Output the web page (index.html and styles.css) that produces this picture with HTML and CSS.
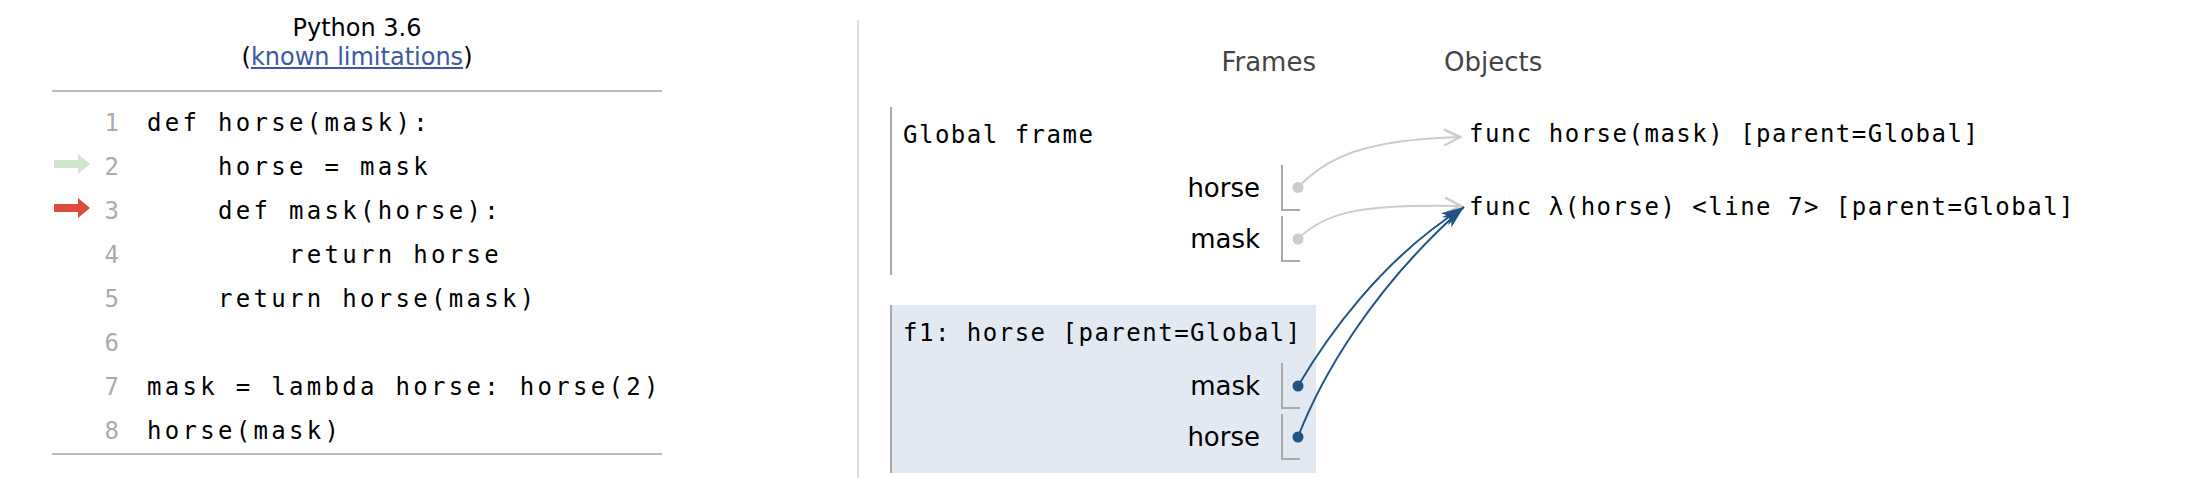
FILE: index.html
```html
<html>
<head>

	<meta charset="utf-8">
	<title>Python Tutor</title>

	<link rel="stylesheet" href="styles.css">

</head>
<body>

	<div class="page">

		<div class="codePane">

			<div class="langDisplay">
				Python 3.6<br>
				(<a href="#">known limitations</a>)
			</div>

			<div class="code">
				<div class="line"><span class="arrow"></span><span class="num">1</span><span class="src">def horse(mask):</span></div>
				<div class="line"><span class="arrow"><svg width="36" height="20"><rect x="0" y="6" width="25" height="8" fill="#cfe5cc"/><polygon points="24,0 36,10 24,20" fill="#cfe5cc"/></svg></span><span class="num">2</span><span class="src">    horse = mask</span></div>
				<div class="line"><span class="arrow"><svg width="36" height="20"><rect x="0" y="6" width="25" height="8" fill="#dc4a3d"/><polygon points="24,0 36,10 24,20" fill="#dc4a3d"/></svg></span><span class="num">3</span><span class="src">    def mask(horse):</span></div>
				<div class="line"><span class="arrow"></span><span class="num">4</span><span class="src">        return horse</span></div>
				<div class="line"><span class="arrow"></span><span class="num">5</span><span class="src">    return horse(mask)</span></div>
				<div class="line"><span class="arrow"></span><span class="num">6</span><span class="src"></span></div>
				<div class="line"><span class="arrow"></span><span class="num">7</span><span class="src">mask = lambda horse: horse(2)</span></div>
				<div class="line"><span class="arrow"></span><span class="num">8</span><span class="src">horse(mask)</span></div>
			</div>

		</div>


		<div class="viz">

			<div class="framesCol">
				<div class="vizHeader">Frames</div>

				<div class="frame">
					<div class="frameTitle">Global frame</div>
					<div class="vars">
						<div class="var"><span class="varName">horse</span><span class="val"></span></div>
						<div class="var"><span class="varName">mask</span><span class="val"></span></div>
					</div>
				</div>

				<div class="frame current">
					<div class="frameTitle">f1: horse [parent=Global]</div>
					<div class="vars">
						<div class="var"><span class="varName">mask</span><span class="val"></span></div>
						<div class="var"><span class="varName">horse</span><span class="val"></span></div>
					</div>
				</div>
			</div>

			<div class="objectsCol">
				<div class="vizHeader objHeader">Objects</div>
				<div class="objects">
					<div class="obj">func horse(mask) [parent=Global]</div>
					<div class="obj">func λ(horse) &lt;line 7&gt; [parent=Global]</div>
				</div>
			</div>

		</div>

	</div>


	<!-- pointers -->
	<svg class="arrows" width="2208" height="478">
		<defs>
			<marker id="headGray" markerUnits="userSpaceOnUse" markerWidth="20" markerHeight="20" refX="18" refY="10" orient="auto">
				<path d="M2,2 L18,10 L2,18" fill="none" stroke="#cccccc" stroke-width="2.5"/>
			</marker>
			<marker id="headBlue" markerUnits="userSpaceOnUse" markerWidth="24" markerHeight="16" refX="23" refY="8" orient="auto">
				<path d="M0,1 L23,8 L0,15 L6,8 Z" fill="#215484"/>
			</marker>
		</defs>

		<path class="link gray" d="M1298,187 C1328,158 1360,140 1460,137" marker-end="url(#headGray)"/>
		<path class="link gray" d="M1298,239 C1325,212 1360,204 1461,206" marker-end="url(#headGray)"/>
		<path class="link blue" d="M1298,386 C1325,340 1380,260 1464,207" marker-end="url(#headBlue)"/>
		<path class="link blue" d="M1298,437 C1320,380 1370,290 1464,207" marker-end="url(#headBlue)"/>

		<circle cx="1298" cy="187.5" r="5.5" fill="#cccccc"/>
		<circle cx="1298" cy="239" r="5.5" fill="#cccccc"/>
		<circle cx="1298" cy="386" r="5.5" fill="#215484"/>
		<circle cx="1298" cy="437" r="5.5" fill="#215484"/>
	</svg>

</body>
</html>
```

FILE: styles.css
```css
* {
	margin: 0;
	padding: 0;
}


body {
	position: relative;
	background: #fff;
	color: #000;
	font-family: "DejaVu Sans", Verdana, sans-serif;
	overflow: hidden;
}

.page {
	display: flex;
	align-items: flex-start;
}


/* Code */

.codePane {
	width: 610px;
	margin-left: 52px;
}

.langDisplay {
	padding-top: 14px;
	font-size: 24px;
	line-height: 29px;
	text-align: center;
}

.langDisplay a {
	color: #3d58a2;
}

.code {
	margin-top: 18px;
	padding-top: 9px;
	border-top: 2px solid #bbb;
	border-bottom: 2px solid #bbb;
	font-family: "DejaVu Sans Mono", monospace;
	font-size: 24px;
}

.line {
	display: flex;
	align-items: center;
	height: 44px;
	line-height: 44px;
}

.arrow {
	display: flex;
	width: 36px;
	height: 20px;
	margin-left: 2px;
	margin-bottom: 7px;
}

.num {
	width: 29px;
	text-align: right;
	color: #aaa;
}

.src {
	margin-left: 28px;
	white-space: pre;
	letter-spacing: 3.3px;
}


/* Frames & objects */

.viz {
	display: flex;
	align-items: flex-start;
	margin-left: 195px;
	margin-top: 20px;
	min-height: 470px;
	padding-left: 31px;
	border-left: 2px solid #ddd;
}

.framesCol {
	width: 426px;
	padding-top: 27px;
}

.vizHeader {
	font-size: 26px;
	line-height: 30px;
	color: #444;
	text-align: right;
}

.frame {
	margin-top: 30px;
	padding: 14px 16px 13px 11px;
	border-left: 2px solid #aaa;
}

.frame.current {
	background: #e3e9f3;
}

.frameTitle, .obj {
	font-family: "DejaVu Sans Mono", monospace;
	font-size: 24px;
	line-height: 28px;
	letter-spacing: 1.5px;
	white-space: nowrap;
}

.vars {
	display: flex;
	flex-direction: column;
	gap: 5px;
	margin-top: 16px;
}

.var {
	display: flex;
	justify-content: flex-end;
	height: 46px;
}

.varName {
	font-size: 26px;
	line-height: 46px;
	margin-right: 21px;
}

.val {
	width: 17px;
	height: 44px;
	border-left: 2px solid #aaa;
	border-bottom: 2px solid #aaa;
}

.objectsCol {
	margin-left: 153px;
	padding-top: 27px;
}

.objHeader {
	text-align: left;
	margin-left: -25px;
}

.objects {
	display: flex;
	flex-direction: column;
	gap: 45px;
	margin-top: 43px;
}


/* Pointers */

.arrows {
	position: absolute;
	left: 0;
	top: 0;
	pointer-events: none;
}

.link {
	fill: none;
	stroke-width: 2;
}

.link.gray {
	stroke: #cccccc;
}

.link.blue {
	stroke: #215484;
}
```
